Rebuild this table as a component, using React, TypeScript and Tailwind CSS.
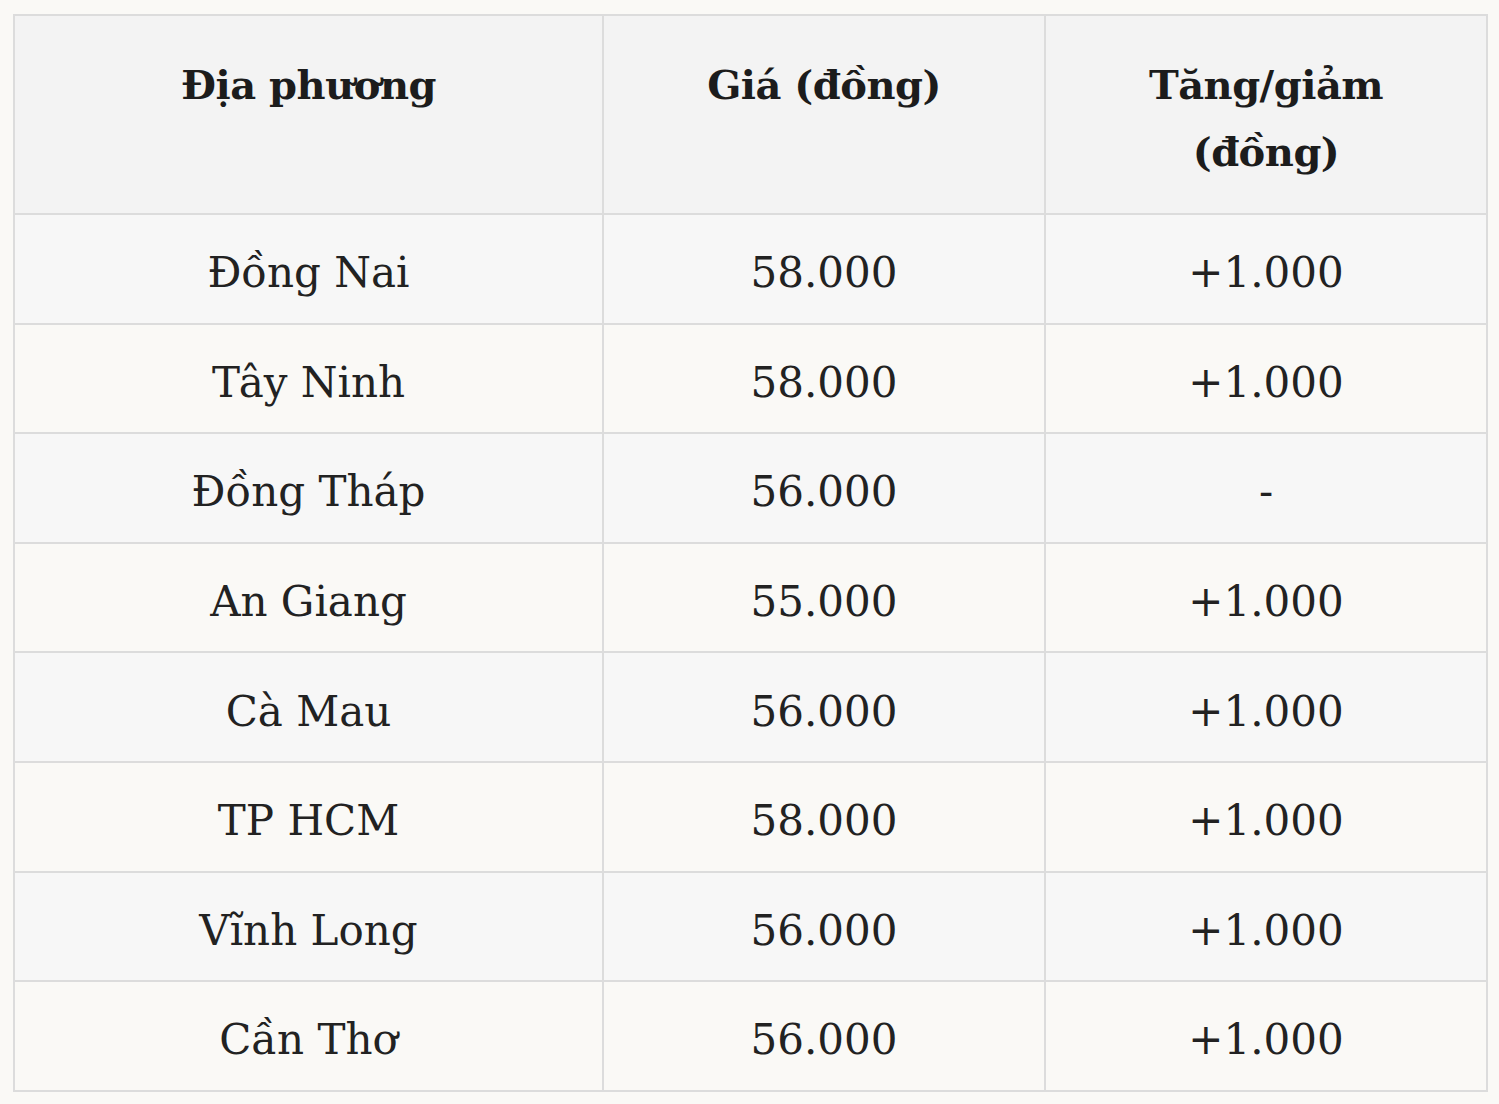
const rows = [
  { place: "Đồng Nai", price: "58.000", change: "+1.000" },
  { place: "Tây Ninh", price: "58.000", change: "+1.000" },
  { place: "Đồng Tháp", price: "56.000", change: "-" },
  { place: "An Giang", price: "55.000", change: "+1.000" },
  { place: "Cà Mau", price: "56.000", change: "+1.000" },
  { place: "TP HCM", price: "58.000", change: "+1.000" },
  { place: "Vĩnh Long", price: "56.000", change: "+1.000" },
  { place: "Cần Thơ", price: "56.000", change: "+1.000" },
]

export default function App() {
  return (
    <main
      className="min-h-[1104px] w-[1499px] bg-[#faf9f6] pl-[13px] pt-[14px] text-[#222222]"
      style={{ fontFamily: '"DejaVu Serif", serif' }}
    >
      <table className="w-[1475px] border-collapse border-2 border-[#dcdcdc] text-center text-[42px]">
        <thead>
          <tr className="bg-[#f3f3f3] text-[40px] tracking-[-0.5px]">
            <th className="h-[198px] w-[589px] border-2 border-[#dcdcdc] px-6 pt-[35px] pb-[28px] align-top font-bold leading-[67px] text-[#1c1c1c]">
              Địa phương
            </th>
            <th className="w-[442px] border-2 border-[#dcdcdc] px-6 pt-[35px] pb-[28px] align-top font-bold leading-[67px] text-[#1c1c1c]">
              Giá (đồng)
            </th>
            <th className="w-[442px] border-2 border-[#dcdcdc] px-6 pt-[35px] pb-[28px] align-top font-bold leading-[67px] text-[#1c1c1c]">
              Tăng/giảm
              <br />
              (đồng)
            </th>
          </tr>
        </thead>
        <tbody>
          {rows.map((row, index) => (
            <tr
              key={row.place}
              className={index % 2 === 0 ? "bg-[#f7f7f7]" : "bg-[#faf9f6]"}
            >
              <td className="h-[109.6px] border-2 border-[#dcdcdc] px-6 pt-[8px] leading-[67px]">
                {row.place}
              </td>
              <td className="h-[109.6px] border-2 border-[#dcdcdc] px-6 pt-[8px] leading-[67px]">
                {row.price}
              </td>
              <td className="h-[109.6px] border-2 border-[#dcdcdc] px-6 pt-[8px] leading-[67px]">
                {row.change}
              </td>
            </tr>
          ))}
        </tbody>
      </table>
    </main>
  )
}
